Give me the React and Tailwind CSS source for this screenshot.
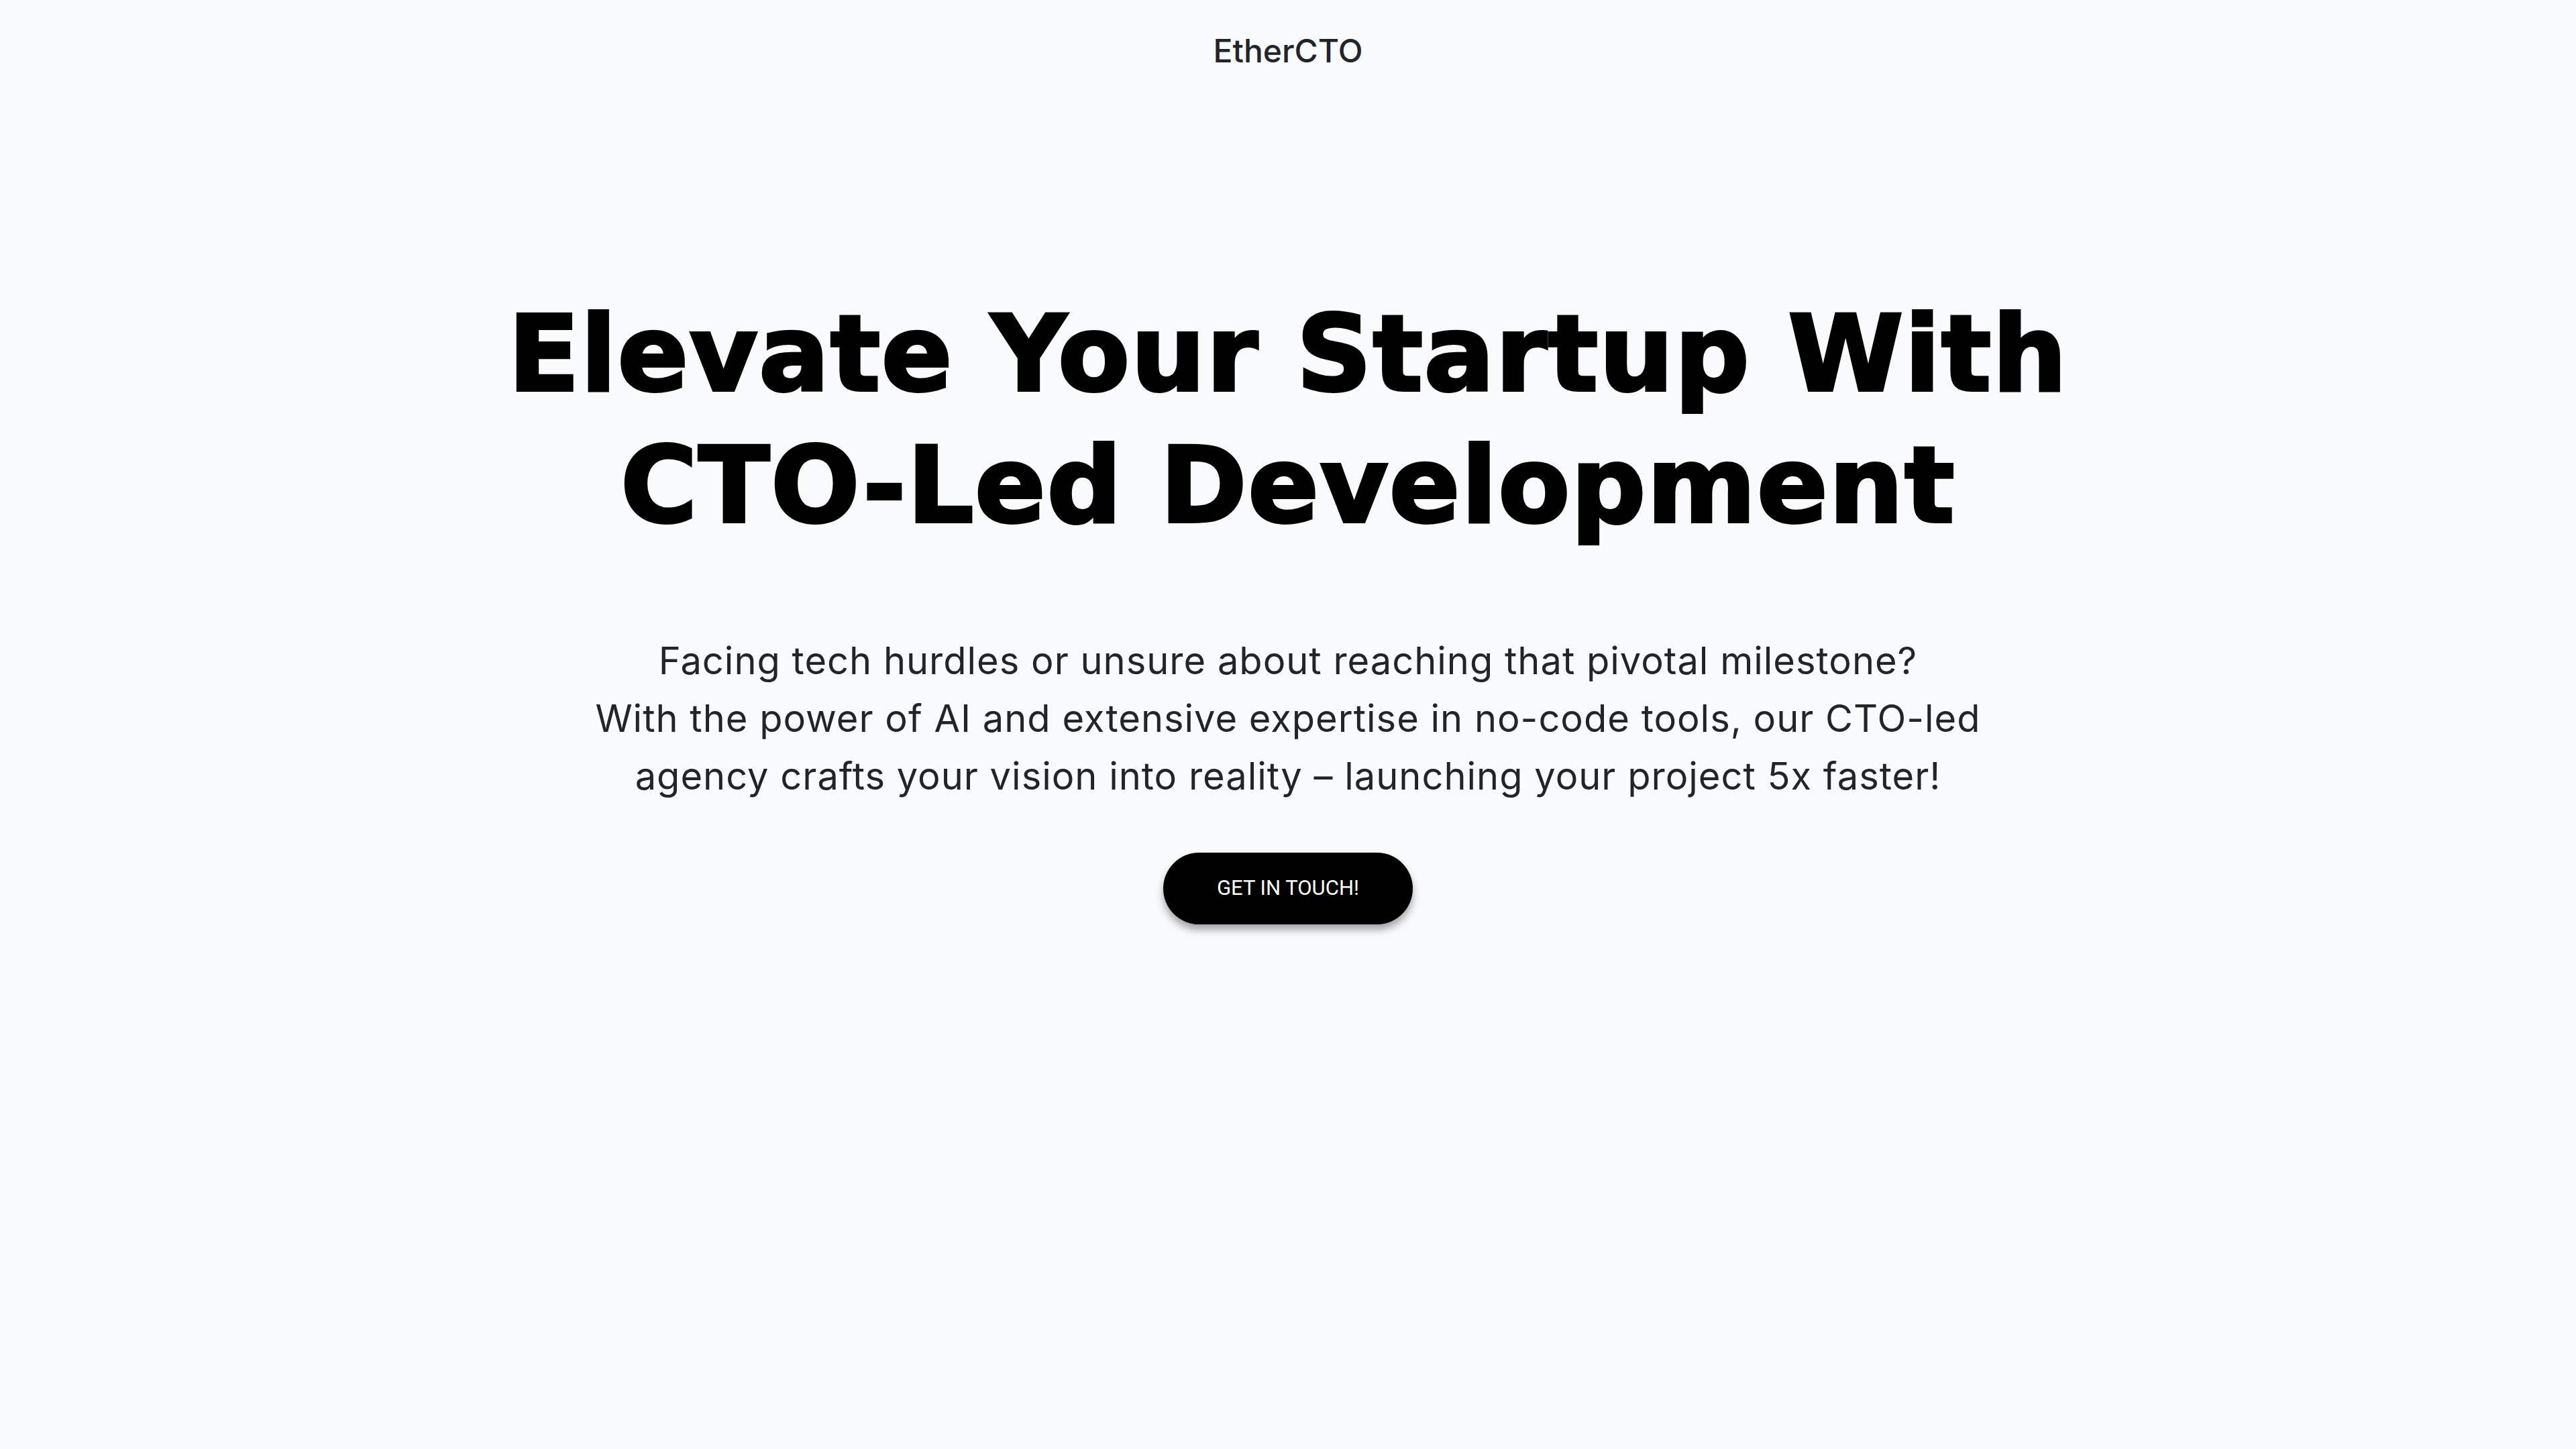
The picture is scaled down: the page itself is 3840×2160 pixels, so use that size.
export default function App() {
  return (
    <div className="min-h-screen w-full bg-[#f9fafc] flex flex-col items-center">
      <header className="w-full flex justify-center pt-[44px]">
        <div className="font-['Inter','Noto_Sans',sans-serif] text-[48px] leading-[64px] font-medium text-[#212429]">
          EtherCTO
        </div>
      </header>
      <main className="flex flex-col items-center mt-[322px]">
        <h1 className="font-['DejaVu_Sans','Liberation_Sans',sans-serif] text-center text-[156px] leading-[196px] font-bold text-black tracking-[1.5px] [-webkit-text-stroke:4px_black]">
          Elevate Your Startup With
          <br />
          CTO-Led Development
        </h1>
        <p className="font-['Inter','Noto_Sans',sans-serif] mt-[120px] text-center text-[56px] leading-[86px] tracking-[1px] text-[#212429]">
          Facing tech hurdles or unsure about reaching that pivotal milestone?
          <br />
          With the power of AI and extensive expertise in no-code tools, our CTO-led
          <br />
          agency crafts your vision into reality – launching your project 5x faster!
        </p>
        <button className="font-['Roboto','Noto_Sans',sans-serif] mt-[71px] w-[372px] h-[107px] rounded-full bg-black text-white text-[31px] shadow-[0_8px_12px_rgba(0,0,0,0.35)]">
          GET IN TOUCH!
        </button>
      </main>
    </div>
  );
}
